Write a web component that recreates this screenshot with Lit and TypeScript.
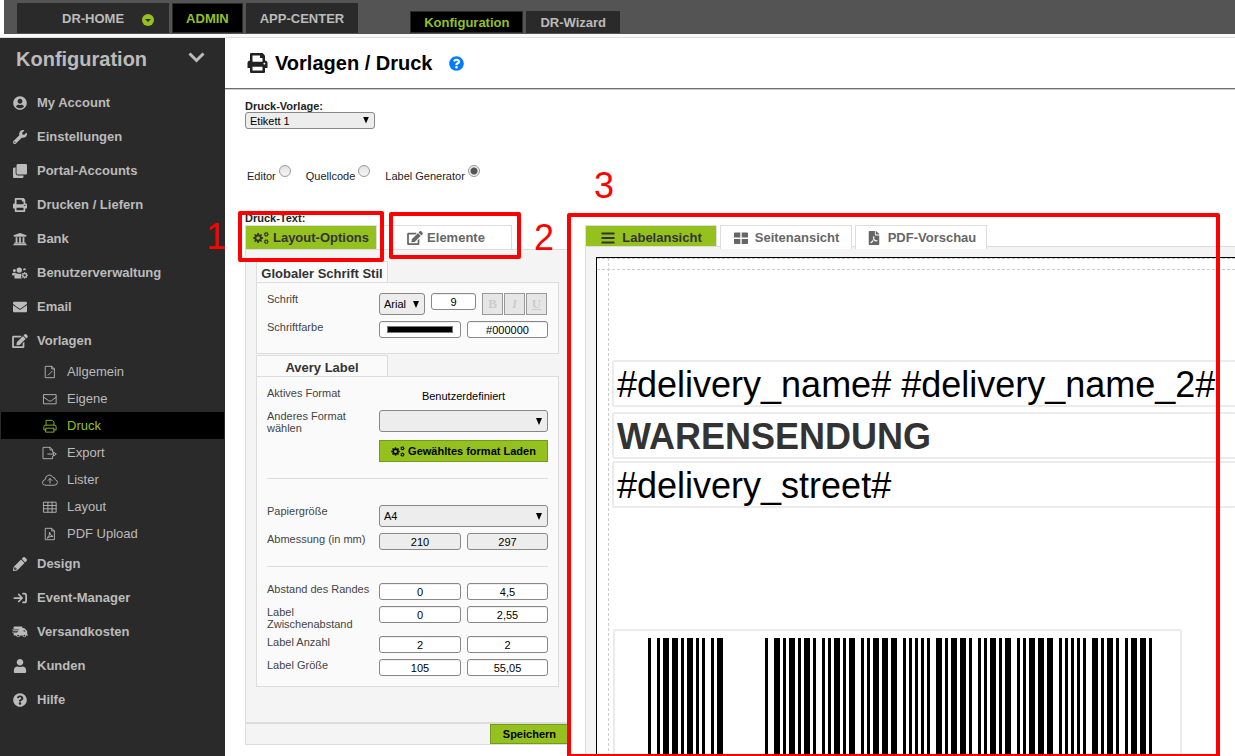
import { LitElement, html, css, svg, nothing } from "lit";
import { customElement, state } from "lit/decorators.js";
import { classMap } from "lit/directives/class-map.js";

/* Outline of a cog wheel with a round hole. */
function gear(cx: number, cy: number, r: number, teeth = 8): string {
  const inner = r * 0.74;
  const pts: string[] = [];
  const step = (Math.PI * 2) / teeth;
  for (let i = 0; i < teeth; i++) {
    const a = i * step;
    for (const [off, rad] of [[-0.32, inner], [-0.2, r], [0.2, r], [0.32, inner]]) {
      const t = a + off * step;
      pts.push(`${(cx + rad * Math.cos(t)).toFixed(1)} ${(cy + rad * Math.sin(t)).toFixed(1)}`);
    }
  }
  const h = r * 0.36;
  return `M${pts.join("L")}ZM${cx - h} ${cy}a${h} ${h} 0 1 0 ${2 * h} 0a${h} ${h} 0 1 0 ${-2 * h} 0Z`;
}

const fill = (box: string, d: string, big = false) =>
  html`<svg class=${classMap({ ico: true, big })} viewBox=${box} fill="currentColor" fill-rule="evenodd" aria-hidden="true"><path d=${d}></path></svg>`;
const line = (body: unknown) =>
  html`<svg class="ico" viewBox="0 0 16 16" fill="none" stroke="currentColor" stroke-linejoin="round" stroke-linecap="round" aria-hidden="true">${body}</svg>`;

const PRINT =
  "M448 192V77.25c0-8.49-3.37-16.62-9.37-22.63L393.37 9.37c-6-6-14.14-9.37-22.63-9.37H96C78.33 0 64 14.33 64 32v160c-35.35 0-64 28.65-64 64v112c0 8.84 7.16 16 16 16h48v96c0 17.67 14.33 32 32 32h320c17.67 0 32-14.33 32-32v-96h48c8.84 0 16-7.16 16-16V256c0-35.35-28.65-64-64-64zm-64 256H128v-96h256v96zm0-224H128V64h192v48c0 8.84 7.16 16 16 16h48v96zm48 72c-13.25 0-24-10.75-24-24 0-13.26 10.75-24 24-24s24 10.74 24 24c0 13.25-10.75 24-24 24z";
const HELP =
  "M504 256c0 136.997-111.043 248-248 248S8 392.997 8 256C8 119.083 119.043 8 256 8s248 111.083 248 248zM262.655 90c-54.497 0-89.255 22.957-116.549 63.758-3.536 5.286-2.353 12.415 2.715 16.258l34.699 26.31c5.205 3.947 12.621 3.008 16.665-2.122 17.864-22.658 30.113-35.797 57.303-35.797 20.429 0 45.698 13.148 45.698 32.958 0 14.976-12.363 22.667-32.534 33.976C247.128 238.528 216 254.941 216 296v4c0 6.627 5.373 12 12 12h56c6.627 0 12-5.373 12-12v-1.333c0-28.462 83.186-29.647 83.186-106.667 0-58.002-60.165-102-116.531-102zM256 338c-25.365 0-46 20.635-46 46 0 25.364 20.635 46 46 46s46-20.636 46-46c0-25.365-20.635-46-46-46z";
const EDIT =
  "M402.6 83.2l90.2 90.2c3.8 3.8 3.8 10 0 13.8L274.4 405.6l-92.8 10.3c-12.4 1.4-22.9-9.1-21.5-21.5l10.3-92.8L388.8 83.2c3.8-3.8 10-3.8 13.8 0zm162-22.9l-48.8-48.8c-15.2-15.2-39.9-15.2-55.2 0l-35.4 35.4c-3.8 3.8-3.8 10 0 13.8l90.2 90.2c3.8 3.8 10 3.8 13.8 0l35.4-35.4c15.2-15.3 15.2-40 0-55.2zM384 346.2V448H64V128h229.8c3.2 0 6.2-1.3 8.5-3.5l40-40c7.6-7.6 2.2-20.5-8.5-20.5H48C21.5 64 0 85.5 0 112v352c0 26.5 21.5 48 48 48h352c26.5 0 48-21.5 48-48V306.2c0-10.7-12.9-16-20.5-8.5l-40 40c-2.2 2.3-3.5 5.3-3.5 8.5z";
const PDF =
  "M181.9 256.1c-5-16-4.9-46.9-2-46.9 8.4 0 7.6 36.9 2 46.9zm-1.7 47.2c-7.7 20.2-17.3 43.3-28.4 62.7 18.3-7 39-17.2 62.9-21.9-12.7-9.6-24.9-23.4-34.5-40.8zM86.1 428.1c0 .8 13.2-5.4 34.9-40.2-6.7 6.3-29.1 24.5-34.9 40.2zM248 160h136v328c0 13.3-10.7 24-24 24H24c-13.3 0-24-10.7-24-24V24C0 10.7 10.7 0 24 0h200v136c0 13.2 10.8 24 24 24zm-8 171.8c-20-12.2-33.3-29-42.7-53.8 4.5-18.5 11.6-46.6 6.2-64.2-4.7-29.4-42.4-26.5-47.8-6.8-5 18.3-.4 44.1 8.1 77-11.6 27.6-28.7 64.6-40.8 85.8-.1 0-.1.1-.2.1-27.1 13.9-73.6 44.5-54.5 68 5.6 6.9 16 10 21.5 10 17.9 0 35.7-18 61.1-61.8 25.8-8.5 54.1-19.1 79-23.2 21.7 11.8 47.1 19.5 64 19.5 29.2 0 31.2-32 19.7-43.4-13.9-13.6-54.3-9.7-73.6-7.2zM377 105L279 7c-4.5-4.5-10.6-7-17-7h-6v128h128v-6.1c0-6.3-2.5-12.4-7-16.9zm-74.1 255.3c4.1-2.7-2.5-11.9-42.8-9 37.1 15.8 42.8 9 42.8 9z";
const COGS = gear(205, 256, 200) + gear(530, 110, 100, 7) + gear(530, 402, 100, 7);

const icons: Record<string, () => unknown> = {
  account: () =>
    fill("0 0 496 512", "M248 8C111 8 0 119 0 256s111 248 248 248 248-111 248-248S385 8 248 8zm0 96c48.6 0 88 39.4 88 88s-39.4 88-88 88-88-39.4-88-88 39.4-88 88-88zm0 344c-58.7 0-111.3-26.6-146.5-68.2 18.8-35.4 55.6-59.8 98.5-59.8 2.4 0 4.8.4 7.1 1.1 13 4.2 26.6 6.9 40.9 6.9 14.3 0 28-2.7 40.9-6.9 2.3-.7 4.7-1.1 7.1-1.1 42.9 0 79.7 24.4 98.5 59.8C359.3 421.4 306.7 448 248 448z"),
  wrench: () =>
    fill("0 0 512 512", "M507.73 109.1c-2.24-9.03-13.54-12.09-20.12-5.51l-74.36 74.36-67.88-11.31-11.31-67.88 74.36-74.36c6.62-6.62 3.43-17.9-5.66-20.16-47.38-11.74-99.55.91-136.58 37.93-39.64 39.64-50.55 97.1-34.05 147.2L18.74 402.76c-24.99 24.99-24.99 65.51 0 90.5 24.99 24.99 65.51 24.99 90.5 0l213.21-213.21c50.12 16.71 107.47 5.68 147.37-34.22 37.07-37.07 49.7-89.32 37.91-136.73zM64 472c-13.25 0-24-10.75-24-24 0-13.26 10.75-24 24-24s24 10.74 24 24c0 13.25-10.75 24-24 24z"),
  clone: () =>
    fill("0 0 512 512", "M464 0c26.51 0 48 21.49 48 48v288c0 26.51-21.49 48-48 48H176c-26.51 0-48-21.49-48-48V48c0-26.51 21.49-48 48-48h288M176 416c-44.112 0-80-35.888-80-80V128H48c-26.51 0-48 21.49-48 48v288c0 26.51 21.49 48 48 48h288c26.51 0 48-21.49 48-48v-48H176z"),
  print: () => fill("0 0 512 512", PRINT),
  bank: () =>
    fill("0 0 512 512", "M496 128v16a8 8 0 0 1-8 8h-24v12c0 6.627-5.373 12-12 12H60c-6.627 0-12-5.373-12-12v-12H24a8 8 0 0 1-8-8v-16a8 8 0 0 1 4.941-7.392l232-88a7.996 7.996 0 0 1 6.118 0l232 88A8 8 0 0 1 496 128zm-24 304H40c-13.255 0-24 10.745-24 24v16a8 8 0 0 0 8 8h464a8 8 0 0 0 8-8v-16c0-13.255-10.745-24-24-24zM96 192v192H60c-6.627 0-12 5.373-12 12v20h416v-20c0-6.627-5.373-12-12-12h-36V192h-64v192h-64V192h-64v192h-64V192H96z"),
  users: () =>
    fill("0 0 640 512", "M96 96a60 60 0 1 1 0 120a60 60 0 1 1 0-120ZM290 32a108 108 0 1 1 0 216a108 108 0 1 1 0-216ZM495 70a58 58 0 0 1 56 76q-56-20-100 10a58 58 0 0 1 44-86ZM60 246h80q24 0 42 16q-66 36-72 90H32q-32 0-32-32v-14q0-60 60-60ZM213 280q77 34 150 0q10 0 18 3q-38 40-12 84q-22 50 20 84q4 18 18 29H144q-48 0-48-48v-36q0-112 117-116Z" + gear(507, 350, 132), true),
  mail: () =>
    fill("0 0 512 512", "M502.3 190.8c3.9-3.1 9.7-.2 9.7 4.7V400c0 26.5-21.5 48-48 48H48c-26.5 0-48-21.5-48-48V195.6c0-5 5.7-7.8 9.7-4.7 22.4 17.4 52.1 39.5 154.1 113.6 21.1 15.4 56.7 47.8 92.2 47.6 35.7.3 72-32.8 92.3-47.6 102-74.1 131.6-96.3 154-113.7zM256 320c23.2.4 56.6-29.2 73.4-41.4 132.7-96.3 142.8-104.7 173.4-128.7 5.8-4.5 9.2-11.5 9.2-18.9v-19c0-26.5-21.5-48-48-48H48c-26.5 0-48 21.5-48 48v19c0 7.4 3.4 14.3 9.2 18.9 30.6 23.9 40.7 32.4 173.4 128.7 16.8 12.2 50.2 41.8 73.4 41.4z"),
  edit: () => fill("0 0 576 512", EDIT, true),
  pencil: () =>
    fill("0 0 512 512", "M497.9 142.1l-46.1 46.1c-4.7 4.7-12.3 4.7-17 0l-111-111c-4.7-4.7-4.7-12.3 0-17l46.1-46.1c18.7-18.7 49.1-18.7 67.9 0l60.1 60.1c18.8 18.7 18.8 49.1 0 67.9zM284.2 99.8L21.6 362.4.4 483.9c-2.9 16.4 11.4 30.6 27.8 27.8l121.5-21.3 262.6-262.6c4.7-4.7 4.7-12.3 0-17l-111-111c-4.8-4.7-12.4-4.7-17.1 0zM88 424h48v36.3l-64.5 11.3-31.1-31.1L51.7 376H88v48z"),
  signin: () =>
    line(svg`<path stroke-width="2" d="M1.5 8H10M6.5 4L10.5 8L6.5 12M11.5 3H13Q15 3 15 5V11Q15 13 13 13H11.5"></path>`),
  truck: () =>
    fill("0 0 640 512", "M96 32H384Q416 32 416 64V96H466Q486 96 500 110L596 206Q608 218 608 238V352H624Q640 352 640 368V384Q640 400 624 400H574A80 80 0 0 1 416 400H322A80 80 0 0 1 164 400H112Q64 400 64 352V300H208V272H0V244H240V216H32V188H272V160H0V132H64V64Q64 32 96 32ZM464 144V240H548L452 144ZM243 368a36 36 0 1 0 .1 72a36 36 0 1 0 0-72ZM495 368a36 36 0 1 0 .1 72a36 36 0 1 0 0-72Z", true),
  user: () =>
    fill("0 0 448 512", "M224 240c66 0 120-54 120-120S290 0 224 0 104 54 104 120s54 120 120 120zm89.600 32h-16.700c-22.200 14-46.900 20-72.900 20s-50.600-6-72.900-20h-16.700C60.200 272 0 332 0 406V464c0 26.500 21.500 48 48 48h352c26.500 0 48-21.500 48-48v-58c0-74-60.200-134-134.400-134z"),
  help: () => fill("0 0 512 512", HELP),
  fileEdit: () => line(svg`<path d="M3 1.500H10L13 4.500V14.500H3ZM10 1.500V4.500H13M6 11.500L10.500 7"></path>`),
  mailLight: () => line(svg`<path d="M1 3H15V13.500H1ZM1 6L6.500 10Q8 11 9.500 10L15 6"></path>`),
  printLight: () => line(svg`<path d="M3.500 7V1.500H10.500L12.500 3.500V7M3.500 12.500H1V9Q1 7 3 7H13Q15 7 15 9V12.500H12.500M3.500 10.500H12.500V15H3.500Z"></path>`),
  fileExport: () => line(svg`<path d="M11 7V4.500L8 1.500H0V14.500H11V11.500M8 1.500V4.500H11M5.500 9.200H12M12.500 7.200L15.200 9.200L12.500 11.200Z"></path>`),
  cloud: () => line(svg`<path d="M3.500 14Q-1 14 -.5 10.500Q0 8 2.500 7.500Q2.500 3 7 2.300Q10 2 11.200 5Q14 4.800 14 7.500Q16.500 8.500 16.500 10.800Q16.500 14 13 14ZM8 11.500V6.500M5.800 8.500L8 6.300L10.200 8.500"></path>`),
  table: () => line(svg`<path d="M1 2.500H15V14H1ZM1 6.300H15M1 10.100H15M5.600 2.500V14M10.400 2.500V14"></path>`),
  filePdf: () => line(svg`<path d="M3 1.500H10L13 4.500V14.500H3ZM10 1.500V4.500H13M5 12.500Q8 9.500 7.500 6Q8 10 11.500 10.800Q8 10 5 12.500"></path>`),
  cogs: () => fill("0 0 640 512", COGS),
  bars: () => fill("0 0 14 14", "M.5 1.500H13.500V3.500H.5ZM.5 6H13.500V8H.5ZM.5 10.500H13.500V12.500H.5Z"),
  grid: () => fill("0 0 14 14", "M1 1.500H6.300V6.500H0V2.500Q0 1.500 1 1.500ZM7.700 1.500H13Q14 1.500 14 2.500V6.500H7.700ZM0 8H6.300V13H1Q0 13 0 12ZM7.700 8H14V12Q14 13 13 13H7.700Z"),
  pdf: () => fill("0 0 384 512", PDF),
};

interface MenuEntry { icon: string; text: string; children?: MenuEntry[]; active?: boolean }

const MENU: MenuEntry[] = [
  { icon: "account", text: "My Account" },
  { icon: "wrench", text: "Einstellungen" },
  { icon: "clone", text: "Portal-Accounts" },
  { icon: "print", text: "Drucken / Liefern" },
  { icon: "bank", text: "Bank" },
  { icon: "users", text: "Benutzerverwaltung" },
  { icon: "mail", text: "Email" },
  {
    icon: "edit", text: "Vorlagen", children: [
      { icon: "fileEdit", text: "Allgemein" },
      { icon: "mailLight", text: "Eigene" },
      { icon: "printLight", text: "Druck", active: true },
      { icon: "fileExport", text: "Export" },
      { icon: "cloud", text: "Lister" },
      { icon: "table", text: "Layout" },
      { icon: "filePdf", text: "PDF Upload" },
    ],
  },
  { icon: "pencil", text: "Design" },
  { icon: "signin", text: "Event-Manager" },
  { icon: "truck", text: "Versandkosten" },
  { icon: "user", text: "Kunden" },
  { icon: "help", text: "Hilfe" },
];

/* Barcode bars: start module, and those that are two modules wide. */
const BARS = [0, 3, 5, 8, 11, 13, 16, 18, 21, 23, 39, 42, 45, 47, 50, 52, 55, 58, 60, 62, 65, 67, 71, 73, 75, 78, 81, 85, 87, 89, 91, 93, 96, 99, 101, 104, 107, 110, 112, 114, 117, 119, 123, 125, 127, 130, 133, 137, 139, 141, 143, 145, 148, 151, 153, 156, 159, 161, 164, 167];
const WIDE = new Set([5, 8, 13, 23, 42, 47, 52, 62, 67, 75, 78, 81, 96, 101, 104, 114, 119, 127, 130, 133, 148, 153, 161, 164]);

@customElement("app-root")
export class AppRoot extends LitElement {
  @state() private mode = "Label Generator";

  static styles = css`
    :host {
      display: flex; flex-direction: column; position: relative;
      height: 100vh; overflow: hidden; background: #fff; color: #222;
      font: 11px/12px "Liberation Sans", Arial, sans-serif;
    }
    * { box-sizing: border-box; }
    a { color: inherit; text-decoration: none; }
    button, input, select { font: inherit; color: #000; margin: 0; }
    .ico { display: block; width: 100%; height: 100%; overflow: visible; }

    .top { flex: none; background: #545454; height: 34px; margin-left: 4px; padding-left: 13px; display: flex; align-items: flex-end; gap: 3px; }
    .rule { flex: none; height: 4px; background: #fbfafb; border-bottom: 1px solid #ddd; }
    .tab { display: flex; align-items: center; justify-content: center; height: 30px; margin-bottom: 1px; padding: 2px 13px 0; background: #2a2a2a; color: #bbb; border: 1px solid #2a2a2a; font-weight: bold; font-size: 13px; }
    .tab.home { padding: 2px 14px 0 44px; gap: 18px; }
    .tab.on { background: #000; color: #95c11f; padding: 2px 13px 0; }
    .tab.low { height: 22px; padding: 2px 13px 0; }
    .tab.first { margin-left: 49px; }
    .home svg { width: 12px; height: 12px; margin-top: 2px; }

    .body { flex: 1; min-height: 0; display: flex; }
    .side { flex: none; width: 225px; background: #2a2a2a; color: #bbb; }
    .head { display: flex; align-items: center; justify-content: space-between; height: 42px; padding: 0 20px 0 16px; font-size: 20px; font-weight: bold; }
    .head svg { width: 17px; height: 11px; margin-bottom: 4px; }
    .menu { list-style: none; margin: 6px 0 0; padding: 0; font-size: 13px; font-weight: bold; }
    .menu a { display: flex; align-items: center; height: 34px; padding-left: 13px; gap: 10px; }
    .menu .pic { width: 14px; height: 14px; }
    .menu .big { width: 16px; margin-left: -1px; }
    .sub { list-style: none; margin: 0; padding: 0 1px; font-weight: normal; }
    .sub a { height: 27px; padding-left: 42px; }
    .sub a.on { background: #000; color: #95c11f; }

    .main { flex: 1; min-width: 0; display: flex; flex-direction: column; }
    .title { flex: none; display: flex; align-items: center; height: 51px; padding-left: 22px; border-bottom: 1px solid #707070; box-shadow: 0 1px #ccc; }
    .title h1 { margin: 0 17px 0 7px; color: #000; font-size: 20px; line-height: 24px; }
    .title .pic { width: 21px; height: 20px; }
    .title a { width: 15px; height: 15px; color: #007bff; }
    .content { flex: 1; min-height: 0; display: flex; flex-direction: column; align-items: stretch; padding: 11px 0 0 20px; }
    .cap { flex: none; font-weight: bold; }
    .pick { position: relative; display: block; width: 130px; height: 17px; flex: none; }
    .pick::after { content: ""; position: absolute; right: 6px; top: 50%; margin-top: -4px; width: 6px; height: 7px; background: #000; clip-path: polygon(0 0, 100% 0, 50% 100%); pointer-events: none; }
    select { appearance: none; display: block; width: 100%; height: 100%; padding: 0 4px; background: #ededed; border: 1px solid #888; border-radius: 3px; }
    .modes { flex: none; display: flex; gap: 15px; height: 17px; margin: 36px 0 30px; padding: 0 2px; }
    .modes label { display: flex; align-items: flex-end; gap: 3px; }
    .modes input { appearance: none; align-self: flex-start; width: 12px; height: 12px; border: 1px solid #999; border-radius: 50%; background: linear-gradient(#e2e2e2, #f6f6f6); }
    .modes input:checked { background: radial-gradient(circle, #555 0 3px, #eee 4px); }

    .work { flex: 1; min-height: 0; display: flex; gap: 15px; margin-top: 1px; align-items: stretch; }
    .left { flex: none; width: 325px; }
    .right { flex: 1; min-width: 0; display: flex; flex-direction: column; }
    .tabs { flex: none; display: flex; gap: 3px; height: 24px; }
    .tabs button { display: flex; align-items: center; justify-content: center; gap: 4px; width: 132px; padding: 0; background: #fff; border: 1px solid #ddd; border-bottom: 0; color: #666; font-size: 13px; font-weight: bold; }
    .tabs button.on { background: #95c11f; color: #333; }
    .tabs .pic { width: 16px; height: 14px; }
    .right .tabs { height: 21px; }
    .right .tabs button { height: 24px; gap: 6px; z-index: 1; }
    .right .tabs button.on { height: 21px; padding-top: 3px; }

    .panel { background: #f4f4f4; border: 1px solid #ddd; padding: 11px 10px 35px; }
    .legend { width: 132px; height: 22px; margin: 0 0 -1px; border: 1px solid #ddd; border-bottom: 0; background: #fafafa; color: #333; font-size: 13px; line-height: 24px; text-align: center; white-space: nowrap; }
    .box { background: #fafafa; border: 1px solid #ddd; padding: 10px; display: flex; flex-direction: column; gap: 6px; color: #444; }
    .box.font { padding-bottom: 15px; margin-bottom: 1px; }
    .row { display: grid; grid-template-columns: 112px 82px 1fr; align-items: start; }
    .row > :nth-child(3) { margin-left: 6px; width: calc(100% - 6px); }
    .row > .wide { grid-column: 2 / 4; width: 100%; }
    .row .pick { height: 22px; }
    .row .pick::after { margin-top: -3px; }
    .row .arial { width: 46px; }
    .tools { display: flex; align-items: flex-start; gap: 6px; }
    .box .tools input { width: 45px; }
    .styles { display: flex; gap: 1px; }
    .styles button { width: 21px; height: 22px; padding: 0; background: #e6e6e6; border: 1px solid #999; color: #ccc; font: bold 13px "Liberation Serif", serif; }
    .styles .i { font-style: italic; }
    .styles .u { text-decoration: underline; }
    .box input { width: 100%; height: 17px; padding: 1px 2px 0; background: #fff; border: 1px solid #888; border-radius: 3px; text-align: center; box-shadow: inset 0 1px #eee; }
    .box input:disabled { background: #ededed; color: #000; }
    .box input.color { padding: 4px 7px; }
    .color::-webkit-color-swatch-wrapper { padding: 0; }
    .color::-webkit-color-swatch { border: 1px solid #777; }
    .current { color: #000; text-align: center; line-height: 18px; height: 17px; }
    .go { display: flex; align-items: center; justify-content: center; gap: 3px; height: 22px; padding: 0; background: #95c11f; border: 1px solid #76991a; font-weight: bold; }
    .go .pic { width: 14px; height: 11px; }
    hr { width: 100%; height: 1px; margin: 10px 0; border: 0; background: #ddd; }
    hr.far { margin-bottom: 20px; }
    .foot { display: flex; justify-content: flex-end; height: 22px; background: #f4f4f4; border: 1px solid #ddd; }
    .foot .go { padding: 0 12px; height: 20px; }

    .view { flex: 1; min-height: 0; border: 1px solid #ddd; border-width: 1px 0 0 1px; background: #f4f4f4; padding: 10px 0 0 10px; }
    .sheet { position: relative; height: 100%; background: #fff; border: 1px solid #000; border-width: 1px 0 0 1px; overflow: hidden; }
    .guide { position: absolute; border: 0 dashed #ccc; }
    .guide.h0 { top: 0; left: 0; right: 0; border-top-width: 1px; }
    .guide.h { top: 11px; left: 0; right: 0; border-top-width: 1px; }
    .guide.v { left: 11px; top: 0; bottom: 0; border-left-width: 1px; }
    .node { position: absolute; left: 15px; width: 720px; height: 47px; padding: 2px 3px; border: 2px solid #ebebeb; border-radius: 2px; color: #000; font-size: 36px; line-height: 42px; white-space: nowrap; }
    .n1 { top: 102px; }
    .n2 { top: 154px; color: #333; font-weight: bold; }
    .n3 { top: 203px; }
    .n4 { left: 16px; top: 371px; width: 569px; height: 260px; padding: 7px 0 0 33px; }
    .n4 svg { display: block; width: 504px; height: 240px; }

    .mark { position: absolute; border: 4px solid #f00; border-radius: 2px; pointer-events: none; z-index: 2; }
    .m1 { left: 238px; top: 211px; width: 146px; height: 51px; }
    .m2 { left: 389px; top: 212px; width: 132px; height: 47px; }
    .m3 { left: 567px; top: 213px; width: 653px; height: 545px; }
    .num { position: absolute; color: #f00; font-size: 36px; line-height: 40px; z-index: 2; }
    .k1 { left: 206px; top: 217px; }
    .k2 { left: 534px; top: 218px; }
    .k3 { left: 594px; top: 166px; }
  `;

  private item(e: MenuEntry): unknown {
    return html`<li>
      <a href="#" class=${classMap({ on: !!e.active })}><span class="pic">${icons[e.icon]()}</span>${e.text}</a>
      ${e.children ? html`<ul class="sub">${e.children.map((c) => this.item(c))}</ul>` : nothing}
    </li>`;
  }

  private pair(id: string, label: unknown, a: string, b: string, disabled = false) {
    return html`<div class="row">
      <label for=${id}>${label}</label>
      <input id=${id} .value=${a} ?disabled=${disabled} />
      <input aria-label=${`${id} 2`} .value=${b} ?disabled=${disabled} />
    </div>`;
  }

  render() {
    return html`
      <nav class="top">
        <a class="tab home" href="#">DR-HOME
          <svg viewBox="0 0 12 12" aria-hidden="true"><circle cx="6" cy="6" r="6" fill="#95c11f"></circle><path d="M3 5H9L6 8Z" fill="#2a2a2a"></path></svg></a>
        <a class="tab on" href="#">ADMIN</a>
        <a class="tab" href="#">APP-CENTER</a>
        <a class="tab low on first" href="#">Konfiguration</a>
        <a class="tab low" href="#">DR-Wizard</a>
      </nav>
      <div class="rule"></div>
      <div class="body">
        <aside class="side">
          <div class="head">Konfiguration
            <svg viewBox="0 0 17 11" fill="none" stroke="currentColor" stroke-width="3" aria-hidden="true"><path d="M1.500 1.500L8.500 8.500L15.500 1.500"></path></svg></div>
          <ul class="menu">${MENU.map((e) => this.item(e))}</ul>
        </aside>
        <main class="main">
          <header class="title">
            <span class="pic">${icons.print()}</span>
            <h1>Vorlagen / Druck</h1>
            <a href="#" aria-label="Hilfe">${icons.help()}</a>
          </header>
          <div class="content">
            <label class="cap" for="tpl">Druck-Vorlage:</label>
            <span class="pick"><select id="tpl"><option>Etikett 1</option></select></span>
            <div class="modes">
              ${["Editor", "Quellcode", "Label Generator"].map((m) => html`<label>${m}
                <input type="radio" name="mode" .checked=${this.mode === m} @change=${() => (this.mode = m)} /></label>`)}
            </div>
            <div class="cap">Druck-Text:</div>
            <div class="work">
              <section class="left">
                <div class="tabs">
                  <button class="on"><span class="pic">${icons.cogs()}</span>Layout-Options</button>
                  <button><span class="pic">${icons.edit()}</span>Elemente</button>
                </div>
                <div class="panel">
                  <h2 class="legend">Globaler Schrift Stil</h2>
                  <div class="box font">
                    <div class="row">
                      <label for="font">Schrift</label>
                      <div class="wide tools">
                        <span class="pick arial"><select id="font"><option>Arial</option></select></span>
                        <input aria-label="Schriftgröße" value="9" />
                        <span class="styles"><button>B</button><button class="i">I</button><button class="u">U</button></span>
                      </div>
                    </div>
                    <div class="row">
                      <label for="color">Schriftfarbe</label>
                      <input id="color" class="color" type="color" value="#000000" />
                      <input aria-label="Farbwert" value="#000000" />
                    </div>
                  </div>
                  <h2 class="legend">Avery Label</h2>
                  <div class="box">
                    <div class="row"><span>Aktives Format</span><span class="wide current">Benutzerdefiniert</span></div>
                    <div class="row"><label for="fmt">Anderes Format<br />wählen</label>
                      <span class="pick wide"><select id="fmt"><option></option></select></span></div>
                    <div class="row"><span></span><button class="go wide"><span class="pic">${icons.cogs()}</span>Gewähltes format Laden</button></div>
                    <hr class="far" />
                    <div class="row"><label for="paper">Papiergröße</label>
                      <span class="pick wide"><select id="paper"><option>A4</option></select></span></div>
                    ${this.pair("abmessung", "Abmessung (in mm)", "210", "297", true)}
                    <hr />
                    ${this.pair("rand", "Abstand des Randes", "0", "4,5")}
                    ${this.pair("zwischen", html`Label<br />Zwischenabstand`, "0", "2,55")}
                    ${this.pair("anzahl", "Label Anzahl", "2", "2")}
                    ${this.pair("groesse", "Label Größe", "105", "55,05")}
                  </div>
                </div>
                <div class="foot"><button class="go">Speichern</button></div>
              </section>
              <section class="right">
                <div class="tabs">
                  <button class="on"><span class="pic">${icons.bars()}</span>Labelansicht</button>
                  <button><span class="pic">${icons.grid()}</span>Seitenansicht</button>
                  <button><span class="pic">${icons.pdf()}</span>PDF-Vorschau</button>
                </div>
                <div class="view">
                  <div class="sheet">
                    <div class="guide h0"></div><div class="guide h"></div><div class="guide v"></div>
                    <div class="node n1">#delivery_name# #delivery_name_2#</div>
                    <div class="node n2">WARENSENDUNG</div>
                    <div class="node n3">#delivery_street#</div>
                    <div class="node n4">
                      <svg viewBox="0 0 168 80" preserveAspectRatio="none" shape-rendering="crispEdges" role="img" aria-label="Barcode">
                        ${BARS.map((x) => svg`<rect x=${x} y="0" width=${WIDE.has(x) ? 2 : 1} height="80"></rect>`)}
                      </svg>
                    </div>
                  </div>
                </div>
              </section>
            </div>
          </div>
        </main>
      </div>
      <div class="mark m1"></div><div class="mark m2"></div><div class="mark m3"></div>
      <span class="num k1">1</span><span class="num k2">2</span><span class="num k3">3</span>
    `;
  }
}
